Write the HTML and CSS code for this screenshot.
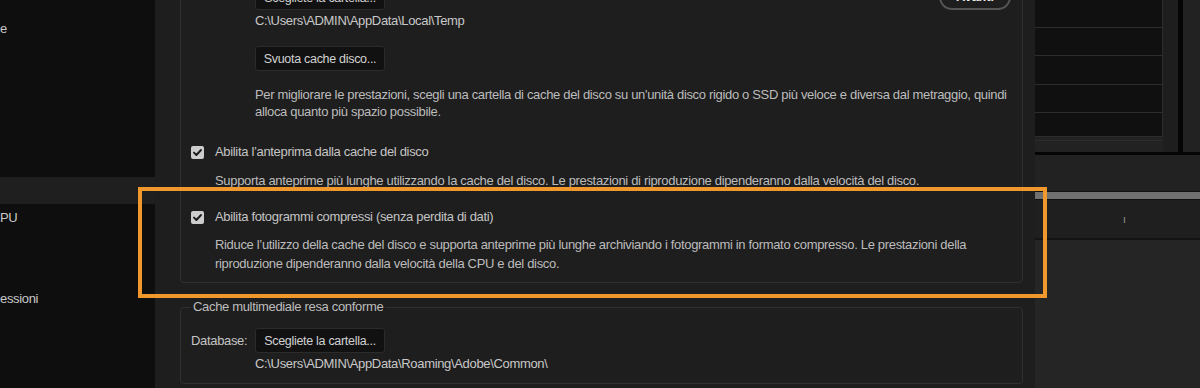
FILE: index.html
```html
<!DOCTYPE html>
<html lang="it">
<head>
<meta charset="utf-8">
<title>Preferenze - Cache multimediale</title>
<link rel="stylesheet" href="styles.css">
</head>
<body>
<div class="app">
  <nav class="sidebar">
    <div class="nav-item">e</div>
    <div class="nav-item"></div>
    <div class="nav-item"></div>
    <div class="nav-item"></div>
    <div class="nav-item"></div>
    <div class="nav-item"></div>
    <div class="nav-item active"></div>
    <div class="nav-item">PU</div>
    <div class="nav-item"></div>
    <div class="nav-item"></div>
    <div class="nav-item">essioni</div>
    <div class="nav-item"></div>
  </nav>

  <main class="dialog">
    <section class="group first">
      <div class="row top-row">
        <button class="btn">Scegliete la cartella...</button>
        <button class="pill">Avanti</button>
      </div>
      <div class="path">C:\Users\ADMIN\AppData\Local\Temp</div>
      <button class="btn clear-btn">Svuota cache disco...</button>
      <p class="note">Per migliorare le prestazioni, scegli una cartella di cache del disco su un'unità disco rigido o SSD più veloce e diversa dal metraggio, quindi alloca quanto più spazio possibile.</p>
      <label class="check first-check"><span class="box"><svg viewBox="0 0 13 13" width="13" height="13"><path d="M3 6.6 L5.4 9 L10 4" fill="none" stroke="#1b1b1b" stroke-width="1.9" stroke-linecap="round" stroke-linejoin="round"/></svg></span>Abilita l’anteprima dalla cache del disco</label>
      <p class="desc one">Supporta anteprime più lunghe utilizzando la cache del disco. Le prestazioni di riproduzione dipenderanno dalla velocità del disco.</p>
      <label class="check second-check"><span class="box"><svg viewBox="0 0 13 13" width="13" height="13"><path d="M3 6.6 L5.4 9 L10 4" fill="none" stroke="#1b1b1b" stroke-width="1.9" stroke-linecap="round" stroke-linejoin="round"/></svg></span>Abilita fotogrammi compressi (senza perdita di dati)</label>
      <p class="desc two">Riduce l’utilizzo della cache del disco e supporta anteprime più lunghe archiviando i fotogrammi in formato compresso. Le prestazioni della riproduzione dipenderanno dalla velocità della CPU e del disco.</p>
    </section>

    <fieldset class="group second">
      <legend>Cache multimediale resa conforme</legend>
      <div class="row db-row">
        <span class="label">Database:</span>
        <button class="btn">Scegliete la cartella...</button>
      </div>
      <div class="path indent">C:\Users\ADMIN\AppData\Roaming\Adobe\Common\</div>
    </fieldset>
  </main>

  <aside class="behind">
    <div class="behind-top">
      <div class="list">
        <div class="list-row"></div>
        <div class="list-row"></div>
        <div class="list-row"></div>
        <div class="list-row"></div>
        <div class="list-row"></div>
      </div>
      <div class="spacer"></div>
      <div class="divider"></div>
      <div class="edge"></div>
    </div>
    <div class="behind-band"></div>
    <div class="scrollbar"></div>
    <div class="ruler"><span class="tick">ı</span></div>
    <div class="behind-bottom"></div>
  </aside>

  <div class="highlight"></div>
</div>
</body>
</html>
```

FILE: styles.css
```css
* { box-sizing: border-box; }

html, body {
  margin: 0;
  padding: 0;
  background: #1d1d1d;
}

body {
  width: 1200px;
  height: 388px;
  overflow: hidden;
  font-family: "Liberation Sans", Arial, sans-serif;
  font-size: 13px;
  letter-spacing: -0.33px;
  color: #c4c4c4;
}

.app {
  position: relative;
  display: flex;
  width: 1200px;
  height: 388px;
  overflow: hidden;
}

/* ---------- sidebar ---------- */
.sidebar {
  width: 155px;
  flex: none;
  background: #0e0e0e;
  padding-top: 15px;
  display: flex;
  flex-direction: column;
}

.nav-item {
  height: 27px;
  line-height: 27px;
  color: #c9c9c9;
  font-size: 13px;
  white-space: nowrap;
}

.nav-item.active {
  background: #1f1f1f;
}

/* ---------- dialog ---------- */
.dialog {
  width: 880px;
  flex: none;
  background: #1e1e1e;
  padding: 0 12px 0 25px;
  display: flex;
  flex-direction: column;
}

.group {
  border: 1px solid #303030;
  border-radius: 4px;
  padding: 10px 11px 9px 10px;
  margin: 0;
  min-width: 0;
}

.group.first {
  margin-top: -26px;
  display: flex;
  flex-direction: column;
  align-items: flex-start;
}

.row {
  display: flex;
  align-items: center;
  width: 100%;
}

.top-row {
  height: 25px;
  padding-left: 64px;
}

.btn {
  width: 130px;
  height: 25px;
  padding: 0;
  background: #111111;
  border: 1px solid #2b2b2b;
  border-radius: 3px;
  color: #d2d2d2;
  font-family: inherit;
  font-size: 12.5px;
  letter-spacing: -0.3px;
}

.pill {
  margin-left: auto;
  width: 72px;
  height: 26px;
  margin-top: -2px;
  background: #1e1e1e;
  border: 2px solid #555555;
  border-radius: 13px;
  color: #f0f0f0;
  font-family: inherit;
  font-weight: bold;
  font-size: 12.5px;
  padding: 0;
}

.path {
  margin-top: 2px;
  line-height: 18px;
  padding-left: 64px;
  color: #c8c8c8;
}

.clear-btn {
  margin-top: 16px;
  margin-left: 64px;
}

.note {
  margin: 15px 0 0 64px;
  line-height: 17px;
  color: #bcbcbc;
  width: 765px;
}

.check {
  display: flex;
  align-items: center;
  line-height: 18px;
  color: #c4c4c4;
}

.first-check { margin-top: 23px; }
.second-check { margin-top: 18px; }

.box {
  width: 13px;
  height: 13px;
  background: #cdcdcd;
  border-radius: 2px;
  margin-right: 11px;
  display: flex;
}

.desc {
  margin: 0 0 0 24px;
  color: #bcbcbc;
}

.desc.one {
  margin-top: 11px;
  line-height: 18px;
}

.desc.two {
  margin-top: 9px;
  line-height: 19px;
  width: 800px;
}

/* second group, with legend */
.group.second {
  margin-top: 15px;
  padding: 0 11px 10px 10px;
}

.group.second legend {
  padding: 0 2px;
  line-height: 18px;
  color: #bdbdbd;
}

.db-row {
  margin-top: 12px;
  height: 25px;
}

.label {
  width: 64px;
  color: #c4c4c4;
}

.indent { padding-left: 64px; }

/* ---------- panels behind the dialog ---------- */
.behind {
  flex: 1;
  display: flex;
  flex-direction: column;
  background: #222222;
}

.behind-top {
  display: flex;
  flex: none;
  border-bottom: 3px solid #050505;
  height: 155px;
}

.list {
  width: 128px;
  height: 137px;
  background: #101010;
  border-right: 1px solid #2c2c2c;
  border-bottom: 1px solid #2c2c2c;
  display: flex;
  flex-direction: column;
}

.list-row {
  height: 28.3px;
  border-bottom: 1px solid #2d2d2d;
  flex: none;
}

.list-row:first-child { height: 28px; }

.spacer {
  width: 15px;
  background: #1e1e1e;
}

.divider {
  width: 5px;
  background: #050505;
}

.edge {
  flex: 1;
  background: #222222;
}

.behind-band {
  height: 37px;
  background: #222222;
  border-bottom: 1px solid #111111;
}

.scrollbar {
  height: 8px;
  background: #707070;
  border-bottom: 1px solid #111111;
}

.ruler {
  height: 40px;
  background: #1f1f1f;
  border-bottom: 2px solid #141414;
  display: flex;
  align-items: center;
  padding-left: 88px;
}

.tick {
  color: #9a9a9a;
  font-size: 10px;
}

.behind-bottom {
  flex: 1;
  background: #252525;
}

/* ---------- annotation overlay ---------- */
.highlight {
  position: absolute;
  left: 138px;
  top: 187px;
  width: 909px;
  height: 111px;
  border: 4px solid #f0982c;
  pointer-events: none;
}
```
